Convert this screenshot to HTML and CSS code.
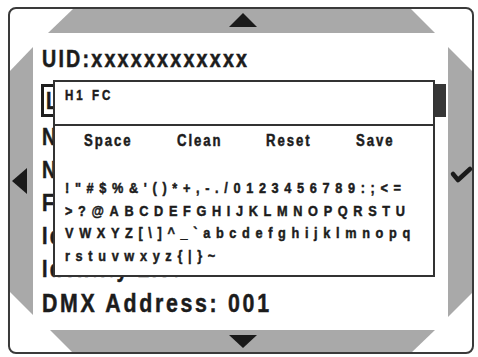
FILE: index.html
```html
<!DOCTYPE html>
<html>
<head>
<meta charset="utf-8">
<link rel="stylesheet" href="styles.css">
</head>
<body>
<div class="page">
  <svg class="art" viewBox="0 0 478 357" width="478" height="357">
    <polygon class="band" points="73,9 411,9 435,33 48,33"/>
    <polygon class="band" points="9,72 33,47 33,315 9,291"/>
    <polygon class="band" points="448,47 473,72 473,292 448,317"/>
    <polygon class="band" points="50,330 435,330 411,353 73,353"/>
    <rect x="9" y="8" width="464" height="345" rx="7" fill="none" stroke="#3a3a3a" stroke-width="2"/>
    <polygon class="arrow" points="243,13 257,27 229,27"/>
    <polygon class="arrow" points="229,335 257,335 243,348"/>
    <polygon class="arrow" points="12,181 27,168 27,194"/>
    <polyline points="453,174 458,180 470,169" fill="none" stroke="#1a1a1a" stroke-width="4.5" stroke-linecap="round" stroke-linejoin="round"/>
  </svg>

  <div class="list">
    <div class="row"><span class="t">UID:xxxxxxxxxxxx</span></div>
    <div class="row-sel">
      <div class="sel"><span class="t">Label</span></div>
      <div class="thumb"></div>
    </div>
    <div class="row first"><span class="t">Name</span></div>
    <div class="row"><span class="t">Network</span></div>
    <div class="row"><span class="t">Firmware</span></div>
    <div class="row"><span class="t">Identify</span></div>
    <div class="row"><span class="t">Identity List</span></div>
    <div class="row dmx"><span class="t">DMX Address: 001</span></div>
  </div>

  <div class="dialog">
    <div class="title"><span class="t">H1 FC</span></div>
    <div class="buttons">
      <span class="t">Space</span>
      <span class="t">Clean</span>
      <span class="t">Reset</span>
      <span class="t">Save</span>
    </div>
    <div class="chars">
      <div class="line"><span class="t">!"#$%&amp;'()*+,-./0123456789:;&lt;=</span></div>
      <div class="line"><span class="t">&gt;?@ABCDEFGHIJKLMNOPQRSTU</span></div>
      <div class="line"><span class="t">VWXYZ[\]^_`abcdefghijklmnopq</span></div>
      <div class="line"><span class="t">rstuvwxyz{|}~</span></div>
    </div>
  </div>
</div>
</body>
</html>
```

FILE: styles.css
```css
html, body {
  margin: 0;
  padding: 0;
  background: #ffffff;
}

.page {
  position: relative;
  width: 478px;
  height: 357px;
  overflow: hidden;
  font-family: "Liberation Sans", Arial, sans-serif;
  font-weight: bold;
  color: #1c1c1c;
}

/* condensed look: Arial-width glyphs narrowed to Arial Narrow proportions */
.t {
  display: inline-block;
  transform: scaleX(0.82);
  transform-origin: 0 0;
  white-space: nowrap;
  -webkit-text-stroke: 0.5px #1c1c1c;
}

.art {
  position: absolute;
  left: 0;
  top: 0;
}

.band {
  fill: #a9a9a9;
}

.arrow {
  fill: #1a1a1a;
}

.list {
  position: relative;
  padding-top: 42px;
  padding-left: 42px;
  width: 404px;
}

.row {
  font-size: 24px;
  line-height: 33px;
  height: 33px;
  letter-spacing: 2.7px;
  white-space: nowrap;
}

.row.first {
  margin-top: 3px;
}

.row.dmx {
  font-size: 26px;
  line-height: 36px;
  height: 36px;
  letter-spacing: 3.3px;
}

.row-sel {
  display: flex;
  margin-top: 9px;
  margin-left: -1px;
  height: 33px;
}

.sel {
  flex: 1;
  box-sizing: border-box;
  border: 3px solid #1e1e1e;
  padding-left: 2px;
  font-size: 24px;
  line-height: 27px;
  letter-spacing: 2.5px;
}

.thumb {
  width: 11px;
  background: #363636;
}

.dialog {
  position: absolute;
  left: 53px;
  top: 80px;
  width: 382px;
  height: 197px;
  box-sizing: border-box;
  border: 2px solid #333333;
  background: #ffffff;
}

.title {
  height: 37px;
  padding-top: 5px;
  padding-left: 10px;
  border-bottom: 2px solid #333333;
  font-size: 14px;
  line-height: 16px;
  letter-spacing: 3.7px;
}

.buttons {
  display: grid;
  grid-template-columns: 93px 89px 90px auto;
  margin-top: 5px;
  padding-left: 29px;
  font-size: 16px;
  line-height: 20px;
  letter-spacing: 2.4px;
}

.chars {
  margin-top: 26px;
  padding-left: 10px;
  font-size: 15.5px;
  line-height: 22.5px;
  letter-spacing: 6.9px;
  white-space: nowrap;
}
```
